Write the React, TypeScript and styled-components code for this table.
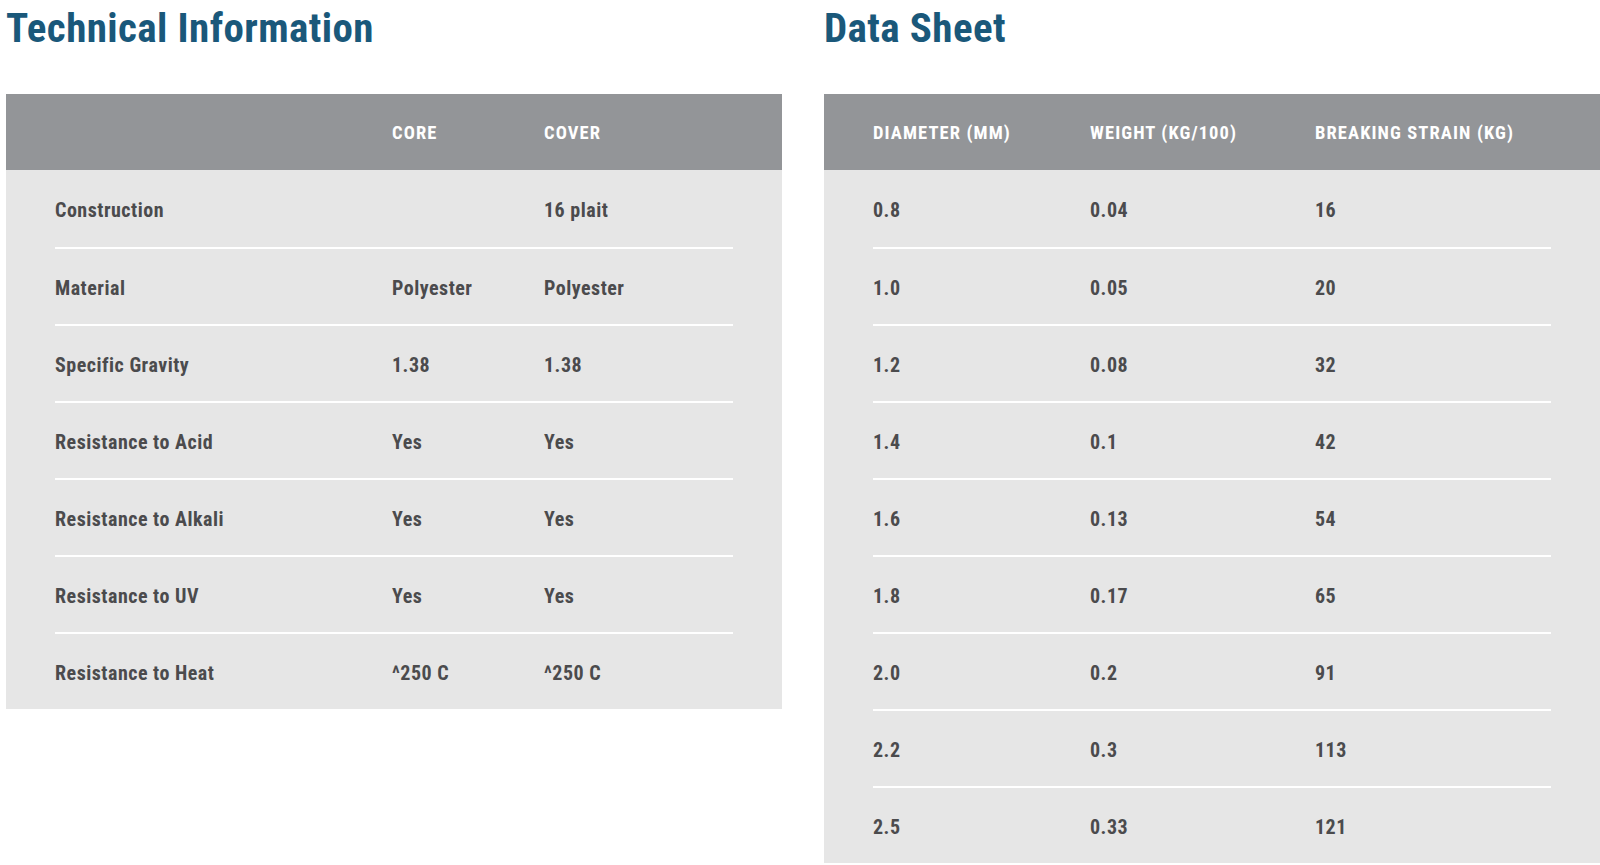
import React from "react";
import styled, { createGlobalStyle } from "styled-components";

const GlobalStyle = createGlobalStyle`
  html, body {
    margin: 0;
    padding: 0;
    background: #ffffff;
  }
  body {
    font-family: "Roboto", "Liberation Sans", sans-serif;
    font-stretch: 75%;
  }
`;

const Page = styled.div`
  display: flex;
  align-items: flex-start;
  gap: 42px;
  padding-left: 6px;
  width: 1600px;
  box-sizing: border-box;
`;

const Column = styled.section`
  width: 776px;
  flex: none;
  display: flex;
  flex-direction: column;
`;

const Title = styled.h2`
  margin: 0;
  height: 94px;
  font-size: 41px;
  line-height: 57px;
  font-weight: 700;
  letter-spacing: 0.4px;
  color: #1a587a;
`;

const Table = styled.div`
  background: #e6e6e6;
`;

const HeaderBar = styled.div<{ $cols: string }>`
  display: grid;
  grid-template-columns: ${(p) => p.$cols};
  align-items: center;
  height: 76px;
  box-sizing: border-box;
  padding: 2px 49px 0;
  background: #939598;
  color: #ffffff;
  font-size: 18.5px;
  font-weight: 700;
  letter-spacing: 1.1px;
  text-transform: uppercase;
`;

const Body = styled.div`
  padding: 0 49px;
`;

const Row = styled.div<{ $cols: string }>`
  display: grid;
  grid-template-columns: ${(p) => p.$cols};
  align-items: center;
  height: 77px;
  box-sizing: border-box;
  padding-top: 2px;
  color: #4b4b4d;
  font-size: 20px;
  font-weight: 700;
  letter-spacing: 0.5px;
  & + & {
    border-top: 2px solid #ffffff;
  }
`;

const Cell = styled.div`
  white-space: nowrap;
`;

const techCols = "337px 152px 1fr";
const dataCols = "217px 225px 1fr";

const techRows: string[][] = [
  ["Construction", "", "16 plait"],
  ["Material", "Polyester", "Polyester"],
  ["Specific Gravity", "1.38", "1.38"],
  ["Resistance to Acid", "Yes", "Yes"],
  ["Resistance to Alkali", "Yes", "Yes"],
  ["Resistance to UV", "Yes", "Yes"],
  ["Resistance to Heat", "^250 C", "^250 C"],
];

const dataRows: string[][] = [
  ["0.8", "0.04", "16"],
  ["1.0", "0.05", "20"],
  ["1.2", "0.08", "32"],
  ["1.4", "0.1", "42"],
  ["1.6", "0.13", "54"],
  ["1.8", "0.17", "65"],
  ["2.0", "0.2", "91"],
  ["2.2", "0.3", "113"],
  ["2.5", "0.33", "121"],
];

function DataTable({ cols, head, rows }: { cols: string; head: string[]; rows: string[][] }) {
  return (
    <Table>
      <HeaderBar $cols={cols}>
        {head.map((h, i) => (
          <Cell key={i}>{h}</Cell>
        ))}
      </HeaderBar>
      <Body>
        {rows.map((r, i) => (
          <Row key={i} $cols={cols}>
            {r.map((c, j) => (
              <Cell key={j}>{c}</Cell>
            ))}
          </Row>
        ))}
      </Body>
    </Table>
  );
}

export default function App() {
  return (
    <>
      <GlobalStyle />
      <Page>
        <Column>
          <Title>Technical Information</Title>
          <DataTable cols={techCols} head={["", "Core", "Cover"]} rows={techRows} />
        </Column>
        <Column>
          <Title>Data Sheet</Title>
          <DataTable
            cols={dataCols}
            head={["Diameter (mm)", "Weight (kg/100)", "Breaking strain (kg)"]}
            rows={dataRows}
          />
        </Column>
      </Page>
    </>
  );
}
